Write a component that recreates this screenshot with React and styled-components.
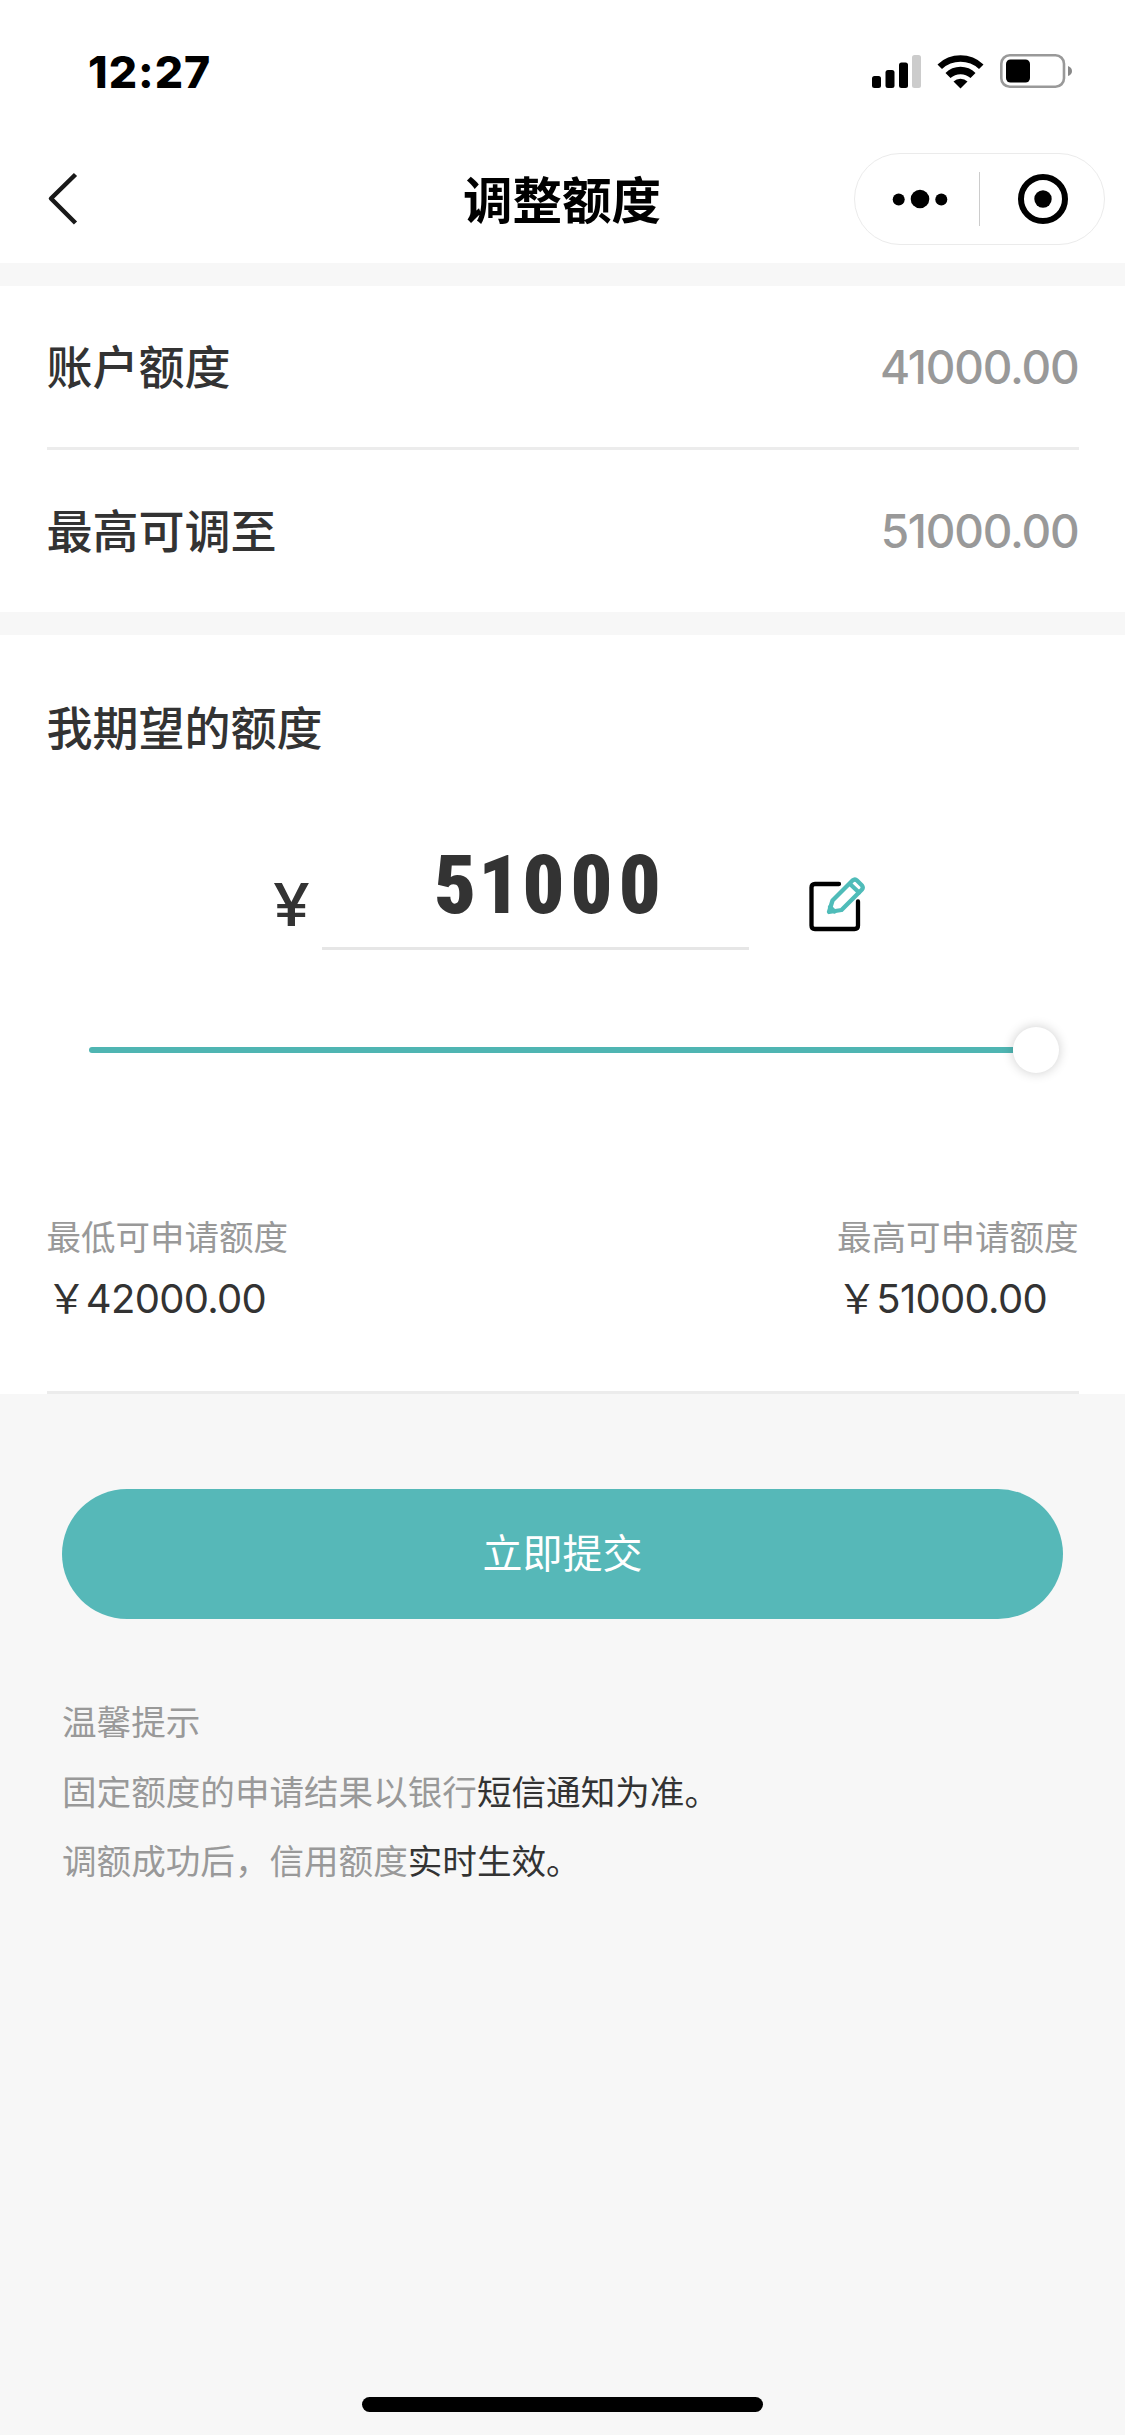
import React from "react";
import styled, { createGlobalStyle } from "styled-components";

const GlobalStyle = createGlobalStyle`
  * {
    box-sizing: border-box;
  }
  body {
    margin: 0;
    background: #f7f7f7;
    color: #333;
    font-family: Inter, "Noto Sans CJK SC", sans-serif;
  }
`;

const Page = styled.div`
  display: flex;
  flex-direction: column;
  height: 2435px;
  background: #f7f7f7;
`;

const StatusBar = styled.div`
  display: flex;
  align-items: center;
  justify-content: space-between;
  height: 135px;
  padding: 9px 53px 0 88px;
  background: #fff;
`;

const Time = styled.span`
  color: #000;
  font-size: 44.5px;
  font-weight: 800;
  letter-spacing: 1px;
  line-height: 48px;
`;

const StatusIcons = styled.div`
  display: flex;
  align-items: center;
  gap: 16px;
  padding-bottom: 2px;
`;

const NavBar = styled.div`
  display: grid;
  grid-template-columns: 1fr auto 1fr;
  align-items: center;
  height: 128px;
  padding: 0 20px 0 46px;
  background: #fff;
`;

const BackButton = styled.button`
  display: flex;
  justify-self: start;
  padding: 0;
  border: 0;
  background: none;
`;

const Title = styled.h1`
  margin: 3px 0 0 -27px;
  color: #000;
  font-size: 49.5px;
  font-weight: 700;
  line-height: 70px;
`;

const Capsule = styled.div`
  display: flex;
  align-items: center;
  justify-self: end;
  width: 251px;
  height: 92px;
  border: 1px solid #ebebeb;
  border-radius: 46px;
`;

const CapsuleButton = styled.button`
  display: flex;
  align-items: center;
  justify-content: center;
  width: 124px;
  padding: 0 0 0 ${(props) => props.$shift || 0}px;
  border: 0;
  background: none;
`;

const CapsuleLine = styled.div`
  width: 1px;
  height: 54px;
  background: #ccc;
`;

const Panel = styled.section`
  margin-top: ${(props) => props.$gap}px;
  padding: 0 46.5px;
  background: #fff;
`;

const Row = styled.div`
  display: flex;
  align-items: center;
  justify-content: space-between;
  height: ${(props) => (props.$divided ? 164 : 162)}px;
  border-bottom: ${(props) => (props.$divided ? "3px solid #ececec" : "0")};
`;

const Label = styled.h2`
  margin: 0;
  font-size: 46px;
  font-weight: 500;
  line-height: 68px;
`;

const Amount = styled.span`
  color: #999;
  font-size: 46px;
  font-weight: 500;
  letter-spacing: -1.2px;
`;

const ExpectTitle = styled(Label)`
  padding-top: 59px;
`;

const InputRow = styled.div`
  display: flex;
  height: 188px;
  padding-left: 226px;
`;

const Currency = styled.span`
  width: 49.5px;
  padding-top: 108px;
  font-size: 59px;
  font-weight: 500;
  line-height: 70px;
  transform: scaleX(1.12);
  transform-origin: left;
`;

const AmountField = styled.div`
  width: 427px;
  padding: 75px 0 0 30px;
  border-bottom: 3px solid #e6e6e6;
  font-family: Roboto, sans-serif;
  font-size: 82px;
  font-weight: 900;
  font-stretch: 75%;
  line-height: 96px;
  text-align: center;
`;

const Digit = styled.span`
  margin: 0 ${(props) => (props.$narrow ? -4 : 0)}px;
  letter-spacing: 6.2px;
`;

const EditButton = styled.button`
  display: flex;
  align-items: flex-start;
  margin-left: 60px;
  padding: 114px 0 0;
  border: 0;
  background: none;
`;

const Slider = styled.div`
  display: flex;
  align-items: center;
  height: 46px;
  margin: 77px 20px 0 42px;
`;

const Track = styled.div`
  flex: 1;
  height: 6px;
  border-radius: 3px 0 0 3px;
  background: #4fb5b2;
`;

const Thumb = styled.div`
  width: 46px;
  height: 46px;
  border-radius: 50%;
  background: #fff;
  box-shadow: 0 0 12px rgba(0, 0, 0, 0.2);
`;

const Limits = styled.div`
  display: flex;
  justify-content: space-between;
  height: 321px;
  padding-top: 139px;
  border-bottom: 3px solid #ececec;
`;

const LimitLabel = styled.div`
  color: #999;
  font-size: 34.5px;
  line-height: 52px;
`;

const LimitValue = styled.div`
  margin-top: 5px;
  font-size: 40px;
  letter-spacing: -0.7px;
  line-height: 60px;
`;

const SubmitButton = styled.button`
  height: 130px;
  margin: 95px 62px 0;
  padding: 0 0 6px;
  border: 0;
  border-radius: 65px;
  background: #56b8b8;
  color: #fff;
  font-family: inherit;
  font-size: 40px;
`;

const Tips = styled.div`
  margin: 69px 62px 0;
  color: #999;
  font-size: 34.6px;
  line-height: 69.5px;

  p {
    margin: 0;
  }

  em {
    color: #333;
    font-style: normal;
  }
`;

const HomeBar = styled.div`
  align-self: center;
  width: 401px;
  height: 15px;
  margin: auto 0 23px;
  border-radius: 8px;
  background: #000;
`;

const SignalIcon = () => (
  <svg width="49" height="34" viewBox="0 0 49 34">
    <rect x="0" y="22" width="9" height="12" rx="2.5" />
    <rect x="13.5" y="16" width="9" height="18" rx="2.5" />
    <rect x="27" y="8.5" width="9" height="25.5" rx="2.5" />
    <rect x="40" y="1" width="9" height="33" rx="2.5" fill="#ccc" />
  </svg>
);

const WifiIcon = () => (
  <svg width="47" height="35" viewBox="0 0 47 35">
    <path d="M0.5 10.5 A33 33 0 0 1 46.5 10.5 L42 15 A27 27 0 0 0 5 15 Z" />
    <path d="M8.5 19 A21 21 0 0 1 38.5 19 L33.5 24 A15 15 0 0 0 13.5 24 Z" />
    <path d="M16.5 27.5 A10 10 0 0 1 30.5 27.5 L23.5 34.5 Z" />
  </svg>
);

const BatteryIcon = () => (
  <svg width="72" height="34" viewBox="0 0 72 34">
    <rect x="1.3" y="1.3" width="62.7" height="31.4" rx="8.5" fill="none" stroke="#999" strokeWidth="2.6" />
    <rect x="6" y="5.5" width="24" height="23" rx="4.5" />
    <path d="M68 12 Q72 13.5 72 17 Q72 20.5 68 22 Z" fill="#888" />
  </svg>
);

const BackIcon = () => (
  <svg width="34" height="54" viewBox="0 0 34 54" fill="none" stroke="#191919" strokeWidth="4.5">
    <path d="M29.5 2.5 L5 26.5 L29.5 51" strokeLinejoin="round" />
  </svg>
);

const MoreIcon = () => (
  <svg width="56" height="20" viewBox="0 0 56 20">
    <circle cx="6.7" cy="10.5" r="6" />
    <circle cx="28" cy="10" r="9.3" />
    <circle cx="49.3" cy="10.5" r="6" />
  </svg>
);

const CloseIcon = () => (
  <svg width="52" height="52" viewBox="0 0 52 52">
    <circle cx="26" cy="26" r="22" fill="none" stroke="#000" strokeWidth="6" />
    <circle cx="26" cy="26" r="8.7" />
  </svg>
);

const EditIcon = () => (
  <svg width="58" height="60" viewBox="0 0 58 60" fill="none" strokeLinecap="round" strokeLinejoin="round">
    <path
      d="M30 8 H6 Q2.5 8 2.5 11.5 V49.5 Q2.5 53 6 53 H45.5 Q49 53 49 49.5 V25.5"
      stroke="#000"
      strokeWidth="4.3"
    />
    <g stroke="#4fbcb9" strokeWidth="4.3">
      <path d="M20 36 L23.5 24.5 L43.5 4.5 Q46 2.5 48 4.5 L53 9.5 Q54.5 11.5 53 13.5 L32.5 34 Z" />
      <path d="M41 8 L50 16.5 M21 31 L25.5 35.5" />
    </g>
  </svg>
);

const App = () => {
  const amount = "51000";

  return (
    <React.Fragment>
      <GlobalStyle />
      <Page>
        <StatusBar>
          <Time>12:27</Time>
          <StatusIcons>
            <SignalIcon />
            <WifiIcon />
            <BatteryIcon />
          </StatusIcons>
        </StatusBar>
        <NavBar>
          <BackButton>
            <BackIcon />
          </BackButton>
          <Title>调整额度</Title>
          <Capsule>
            <CapsuleButton $shift={6}>
              <MoreIcon />
            </CapsuleButton>
            <CapsuleLine />
            <CapsuleButton $shift={1}>
              <CloseIcon />
            </CapsuleButton>
          </Capsule>
        </NavBar>

        <Panel $gap={23}>
          <Row $divided>
            <Label>账户额度</Label>
            <Amount>41000.00</Amount>
          </Row>
          <Row>
            <Label>最高可调至</Label>
            <Amount>51000.00</Amount>
          </Row>
        </Panel>

        <Panel $gap={23}>
          <ExpectTitle>我期望的额度</ExpectTitle>
          <InputRow>
            <Currency>¥</Currency>
            <AmountField>
              {amount.split("").map((digit, i) => (
                <Digit key={i} $narrow={digit === "1"}>
                  {digit}
                </Digit>
              ))}
            </AmountField>
            <EditButton>
              <EditIcon />
            </EditButton>
          </InputRow>
          <Slider>
            <Track />
            <Thumb />
          </Slider>
          <Limits>
            <div>
              <LimitLabel>最低可申请额度</LimitLabel>
              <LimitValue>￥42000.00</LimitValue>
            </div>
            <div>
              <LimitLabel>最高可申请额度</LimitLabel>
              <LimitValue>￥51000.00</LimitValue>
            </div>
          </Limits>
        </Panel>

        <SubmitButton>立即提交</SubmitButton>
        <Tips>
          <p>温馨提示</p>
          <p>
            固定额度的申请结果以银行<em>短信通知为准。</em>
          </p>
          <p>
            调额成功后，信用额度<em>实时生效。</em>
          </p>
        </Tips>
        <HomeBar />
      </Page>
    </React.Fragment>
  );
};

export default App;
